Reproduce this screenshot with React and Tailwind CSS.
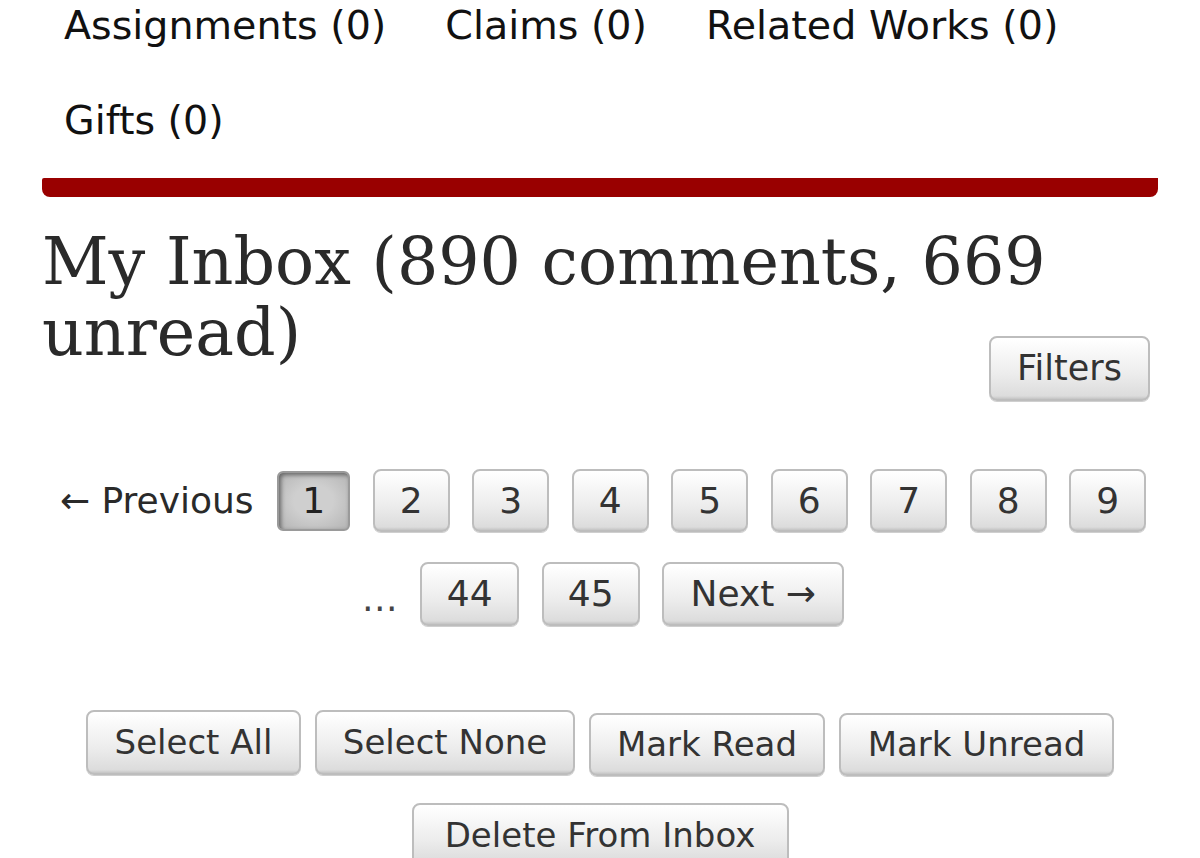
import React from "react";

const sans = { fontFamily: '"DejaVu Sans", Verdana, sans-serif' };
const serif = { fontFamily: '"DejaVu Serif", Georgia, serif' };

const btn =
  "inline-flex items-center justify-center rounded-[8px] border-2 border-[#bdbdbd] bg-[linear-gradient(#ffffff_2%,#ececec_60%,#dcdcdc_95%,#c4c4c4_100%)] text-[#333] shadow-[0_1px_0_#cfcfcf]";

function Btn({ children, className = "" }) {
  return <span className={`${btn} ${className}`}>{children}</span>;
}

export default function App() {
  const pages = [2, 3, 4, 5, 6, 7, 8, 9];
  return (
    <div className="w-[1200px] h-[858px] overflow-hidden bg-white text-[#2a2a2a]" style={sans}>
      {/* subnav */}
      <div className="h-[178px] overflow-hidden">
        <ul className="-mt-[22px] flex flex-wrap gap-x-[59px] pl-[64px] pr-[42px] text-[39.6px] leading-[95px] text-[#111]">
          <li>Assignments (0)</li>
          <li>Claims (0)</li>
          <li>Related Works (0)</li>
          <li>Gifts (0)</li>
        </ul>
      </div>
      <div className="mx-[42px] h-[19px] bg-[#990000] rounded-b-[8px] rounded-tl-[2px]" />

      {/* heading + filters */}
      <div className="mx-[42px] mt-[29px] flex flex-col">
        <h2 className="h-[110px] text-[65px] leading-[71px] text-[#2a2a2a]" style={serif}>
          <span>My Inbox (890 comments, 669</span> <span>unread)</span>
        </h2>
        <div className="flex justify-end mr-[8px]">
          <Btn className="w-[161px] h-[65px] text-[35px]">Filters</Btn>
        </div>
      </div>

      {/* pagination */}
      <div className="mt-[68px] flex flex-wrap justify-center items-center gap-x-[22.5px] gap-y-[30px] pl-[56px] pr-[50px] text-[36px]">
        <span className="mr-[1px]">← Previous</span>
        <span className="inline-flex items-center justify-center w-[73px] h-[60px] rounded-[6px] border-2 border-[#9a9a9a] bg-[radial-gradient(ellipse_at_center,#cfcfcf_40%,#b4b4b4_100%)] shadow-[inset_2px_2px_4px_#666] text-[#222]">
          1
        </span>
        {pages.map((p) => (
          <Btn key={p} className="w-[77px] h-[63px]">
            {p}
          </Btn>
        ))}
        <span className="text-[#444] -mb-[10px]">…</span>
        <Btn className="w-[99px] h-[64px]">44</Btn>
        <Btn className="w-[98px] h-[64px]">45</Btn>
        <Btn className="w-[182px] h-[64px]">Next →</Btn>
      </div>

      {/* bulk actions */}
      <div className="mt-[84px] flex flex-wrap justify-center items-start gap-x-[14px] gap-y-[27px] px-[80px] text-[34px]">
        <Btn className="w-[215px] h-[65px]">Select All</Btn>
        <Btn className="w-[260px] h-[65px]">Select None</Btn>
        <Btn className="w-[236px] h-[63px] mt-[3px]">Mark Read</Btn>
        <Btn className="w-[275px] h-[63px] mt-[3px]">Mark Unread</Btn>
        <Btn className="w-[377px] h-[64px]">Delete From Inbox</Btn>
      </div>
    </div>
  );
}
